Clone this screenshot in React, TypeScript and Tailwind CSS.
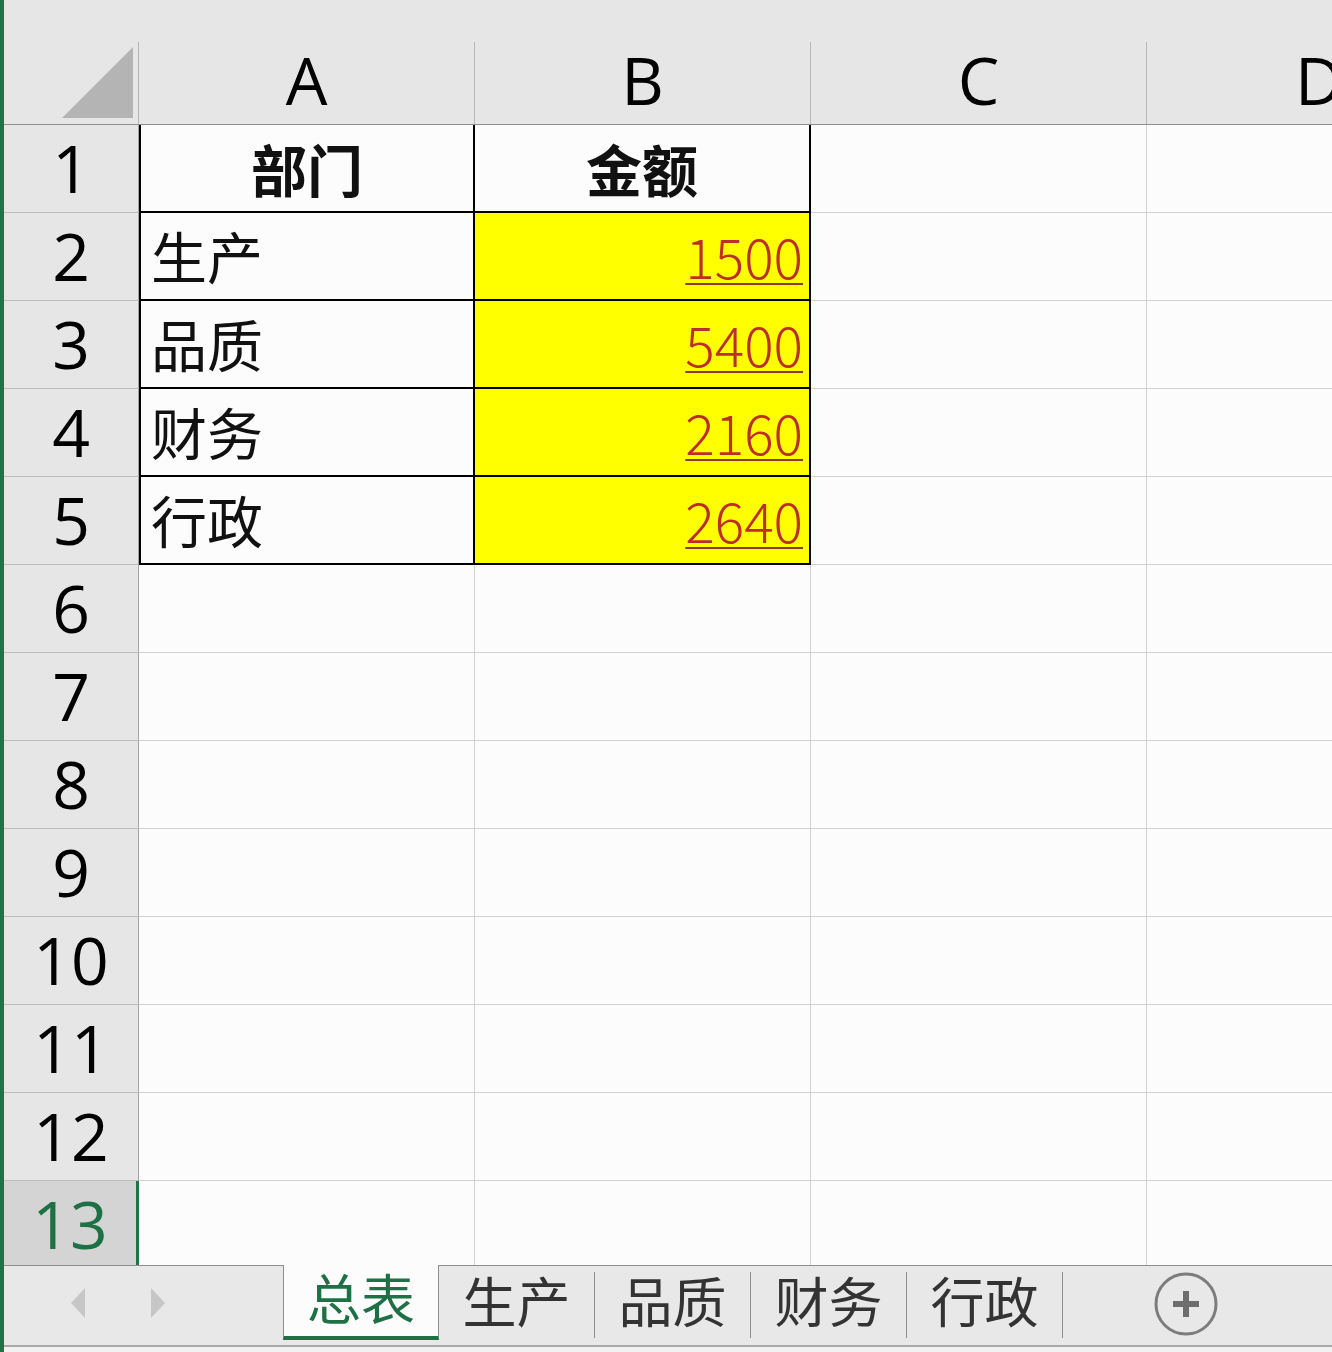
import React from "react";

const latin = "font-['Open_Sans','Noto_Sans',sans-serif]";
const cjk = "font-['Noto_Sans_CJK_SC','Noto_Sans',sans-serif]";

const data = [
  { dept: "生产", amount: "1500" },
  { dept: "品质", amount: "5400" },
  { dept: "财务", amount: "2160" },
  { dept: "行政", amount: "2640" },
];

const tabs = ["生产", "品质", "财务", "行政"];

function RowHeader({ n, active = false }: { n: number; active?: boolean }) {
  return (
    <div
      className={
        active
          ? `w-[135px] shrink-0 flex items-end justify-center pb-[9px] bg-[#d4d4d4] text-[#1e7145] border-r-[3px] border-r-[#217346] text-[66px] leading-none ${latin}`
          : `w-[135px] shrink-0 flex items-end justify-center pb-[12px] bg-[#e6e6e6] text-black border-r border-r-[#a3a3a3] border-b border-b-[#bdbdbd] text-[66px] leading-none ${latin}`
      }
    >
      {n}
    </div>
  );
}

function EmptyCells({ last = false }: { last?: boolean }) {
  const cell = last
    ? "w-[336px] shrink-0 border-r border-[#d2d2d2] bg-[#fdfcfd]"
    : "w-[336px] shrink-0 border-r border-b border-[#d2d2d2] bg-[#fdfcfd]";
  return (
    <>
      <div className={cell} />
      <div className={cell} />
      <div className={cell} />
      <div className={last ? "flex-1 bg-[#fdfcfd]" : "flex-1 border-b border-[#d2d2d2] bg-[#fdfcfd]"} />
    </>
  );
}

function Corner() {
  return (
    <div className="w-[135px] shrink-0 flex flex-col border-b border-b-[#8f8f8f] bg-[#e6e6e6]">
      <div className="h-[42px]" />
      <div className="flex-1 border-r border-r-[#b5b5b5] flex items-end justify-end pr-[4px] pb-[5px]">
        <svg width="72" height="72" viewBox="0 0 72 72">
          <polygon points="0,71 71,0 71,71" fill="#b4b4b4" />
        </svg>
      </div>
    </div>
  );
}

function ColHeader({ label, grow = false }: { label: string; grow?: boolean }) {
  return (
    <div className={grow ? "flex-1 flex flex-col border-b border-[#8f8f8f] overflow-hidden" : "w-[336px] shrink-0 flex flex-col border-b border-[#8f8f8f]"}>
      <div className="h-[42px]" />
      <div
        className={
          grow
            ? `flex-1 flex items-end justify-start pl-[148px] pb-[12px] text-[66px] leading-none text-black whitespace-nowrap ${latin}`
            : `flex-1 flex items-end justify-center pb-[12px] border-r border-[#b8b8b8] text-[66px] leading-none text-black ${latin}`
        }
      >
        {label}
      </div>
    </div>
  );
}

function ArrowLeft() {
  return (
    <svg width="16" height="32" viewBox="0 0 16 32">
      <polygon points="15,1 1,16 15,31" fill="#c6c6c6" />
    </svg>
  );
}

function ArrowRight() {
  return (
    <svg width="16" height="32" viewBox="0 0 16 32">
      <polygon points="1,1 15,16 1,31" fill="#c6c6c6" />
    </svg>
  );
}

function PlusCircle() {
  return (
    <svg width="66" height="66" viewBox="0 0 66 66">
      <circle cx="33" cy="33" r="30" fill="none" stroke="#7c7c7c" strokeWidth="3" />
      <rect x="20" y="30" width="26" height="6" fill="#6e6e6e" />
      <rect x="30" y="20" width="6" height="26" fill="#6e6e6e" />
    </svg>
  );
}

export default function App() {
  return (
    <div className="w-[1332px] h-[1352px] flex bg-[#e6e6e6] overflow-hidden">
      <div className="w-[4px] shrink-0 bg-[#217346]" />
      <div className="flex-1 flex flex-col min-w-0">
        {/* sheet area */}
        <div className="h-[1265px] flex flex-col overflow-hidden">
          <div className="h-[125px] flex shrink-0 bg-[#e6e6e6]">
            <Corner />
            <ColHeader label="A" />
            <ColHeader label="B" />
            <ColHeader label="C" />
            <ColHeader label="D" grow />
          </div>

          {/* row 1: headings */}
          <div className="h-[88px] flex shrink-0">
            <RowHeader n={1} />
            <div className={`w-[336px] shrink-0 border-l-2 border-r-2 border-b-2 border-black bg-[#fdfcfd] flex items-end justify-center pb-[15px] text-[56px] leading-none font-bold text-[#111] ${cjk}`}>
              部门
            </div>
            <div className={`w-[336px] shrink-0 border-r-2 border-b-2 border-black bg-[#fdfcfd] flex items-end justify-center pb-[15px] text-[56px] leading-none font-bold text-[#111] ${cjk}`}>
              金额
            </div>
            <div className="w-[336px] shrink-0 border-r border-b border-[#d2d2d2] bg-[#fdfcfd]" />
            <div className="flex-1 border-b border-[#d2d2d2] bg-[#fdfcfd]" />
          </div>

          {data.map((row, i) => (
            <div key={row.dept} className="h-[88px] flex shrink-0">
              <RowHeader n={i + 2} />
              <div className={`w-[336px] shrink-0 border-l-2 border-r-2 border-b-2 border-black bg-[#fdfcfd] flex items-end pl-[10px] pb-[16px] text-[56px] leading-none text-[#111] ${cjk}`}>
                {row.dept}
              </div>
              <div className={`w-[336px] shrink-0 border-r-2 border-b-2 border-black bg-[#ffff00] flex items-end justify-end pr-[6px] pb-[16px] text-[55px] leading-none font-light text-[#bb2f29] underline decoration-[#8c3a33] decoration-2 underline-offset-[4px] ${cjk}`}>
                {row.amount}
              </div>
              <div className="w-[336px] shrink-0 border-r border-b border-[#d2d2d2] bg-[#fdfcfd]" />
              <div className="flex-1 border-b border-[#d2d2d2] bg-[#fdfcfd]" />
            </div>
          ))}

          {[6, 7, 8, 9, 10, 11, 12].map((n) => (
            <div key={n} className="h-[88px] flex shrink-0">
              <RowHeader n={n} />
              <EmptyCells />
            </div>
          ))}

          <div className="flex-1 flex">
            <RowHeader n={13} active />
            <EmptyCells last />
          </div>
        </div>

        {/* sheet tabs */}
        <div className="h-[80px] flex border-t border-[#8e8e8e] bg-[#e8e8e8]">
          <div className="w-[279px] shrink-0 flex items-center pl-[66px] gap-[64px] pb-[6px]">
            <ArrowLeft />
            <ArrowRight />
          </div>
          <div className={`w-[156px] shrink-0 -mt-px h-[75px] bg-[#fdfcfd] border-l border-r border-[#8e8e8e] border-b-4 border-b-[#1e7145] flex items-center justify-center pb-[8px] text-[54px] leading-none text-[#1e7145] ${cjk}`}>
            总表
          </div>
          {tabs.map((t) => (
            <div key={t} className="w-[156px] shrink-0 flex items-center">
              <div className={`flex-1 flex items-center justify-center pb-[12px] text-[54px] leading-none text-[#333] ${cjk}`}>
                {t}
              </div>
              <div className="w-px h-[66px] bg-[#8e8e8e] self-start mt-[6px]" />
            </div>
          ))}
          <div className="ml-[90px] flex items-center pb-[4px]">
            <PlusCircle />
          </div>
        </div>
        <div className="flex-1 border-t-2 border-[#a9a9a9] bg-[#f2f2f2]" />
      </div>
    </div>
  );
}
